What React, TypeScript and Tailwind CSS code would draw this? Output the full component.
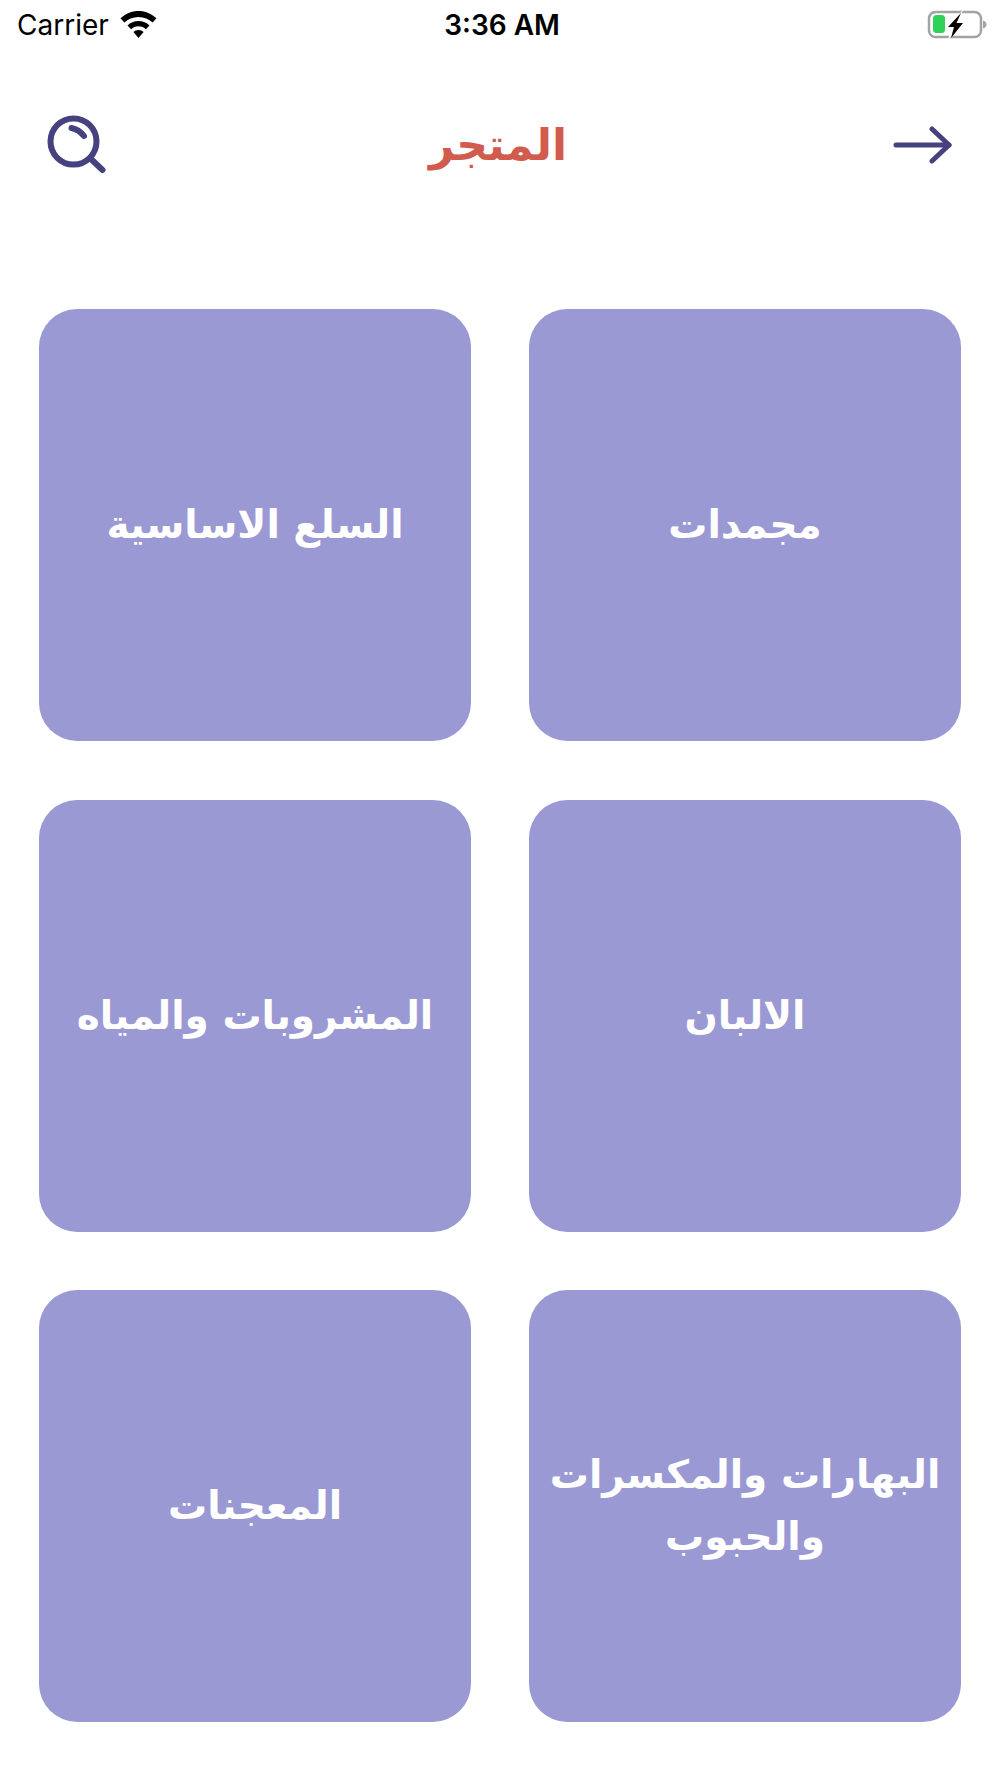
import React from 'react';

const categories = [
  'مجمدات',
  'السلع الاساسية',
  'الالبان',
  'المشروبات والمياه',
  'البهارات والمكسرات والحبوب',
  'المعجنات',
];

const StatusBar = () => {
  return (
    <div className="h-[50px] pl-[17px] pr-[13px] flex items-center justify-between font-['Inter',sans-serif] text-black">
      <div className="w-[200px] flex items-center gap-[11px]">
        <span className="text-[28px] leading-none">Carrier</span>
        <svg width="37" height="28" viewBox="0 0 37 28" fill="currentColor">
          <path d="M18.500 0C11.600 0 5.500 2.700 0.500 7.300l3.900 4.200C8 8.100 13 6 18.500 6S29 8.100 32.600 11.500l3.900-4.200C31.500 2.700 25.400 0 18.500 0Z" />
          <path d="M18.500 10c-4.300 0-8.200 1.700-11 4.400l3.600 3.900c1.900-1.800 4.500-3 7.400-3s5.500 1.200 7.400 3l3.600-3.900c-2.800-2.700-6.700-4.400-11-4.400Z" />
          <path d="M18.500 19c-2 0-3.800.8-5.100 2l5.100 6 5.100-6c-1.300-1.200-3.100-2-5.100-2Z" />
        </svg>
      </div>
      <span className="text-[28px] leading-none font-semibold">3:36 AM</span>
      <div className="w-[200px] flex justify-end">
        <svg width="60" height="30" viewBox="0 0 60 30" fill="none">
          <rect x="2" y="2" width="52" height="25" rx="6.500" stroke="#a3a3a3" strokeWidth="2.500" />
          <rect x="6" y="5" width="12" height="18" rx="3.500" fill="#30d158" />
          <path d="M56 10.500c2 .6 3.500 2 3.500 4s-1.500 3.400-3.500 4Z" fill="#a3a3a3" />
          <path d="M36 0 18 18.500h6l-3 11.500 18-19h-7l4-11Z" fill="#fff" />
          <path d="M34 3 21 17h6l-3 11 12-15h-6.500L34 3Z" fill="#000" />
        </svg>
      </div>
    </div>
  );
};

const Header = () => {
  return (
    <div className="h-[190px] px-[47px] flex items-center justify-between">
      <svg width="60" height="60" viewBox="0 0 60 60" fill="none" stroke="#46427f" strokeLinecap="round" strokeWidth="6">
        <circle cx="26.500" cy="26.500" r="23" />
        <path d="M24.500 13c5 1 9 3.600 12.500 8" />
        <path d="M44.500 44.500l11 10.500" />
      </svg>
      <span dir="rtl" className="flex-1 pr-[4px] text-center text-[44px] leading-none font-bold text-[#d15b4c] font-['DejaVu_Sans',sans-serif]">المتجر</span>
      <svg width="60" height="38" viewBox="0 0 60 38" fill="none" stroke="#46427f" strokeLinecap="round" strokeLinejoin="round" strokeWidth="5">
        <path d="M3 19h53" />
        <path d="M39 3l17 16-17 16" />
      </svg>
    </div>
  );
};

export default function App() {
  return (
    <div className="w-[1000px] h-[1778px] bg-white overflow-hidden">
      <StatusBar />
      <Header />
      <div dir="rtl" className="grid grid-cols-2 gap-x-[58px] gap-y-[58.5px] px-[39px] pt-[69px]">
        {categories.map((name) => (
          <div
            key={name}
            className="h-[432px] rounded-[38px] bg-[#9b99d3] flex items-center justify-center px-[10px] text-center text-white text-[39px] leading-[62px] font-bold font-['DejaVu_Sans',sans-serif]"
          >
            {name}
          </div>
        ))}
      </div>
    </div>
  );
}
